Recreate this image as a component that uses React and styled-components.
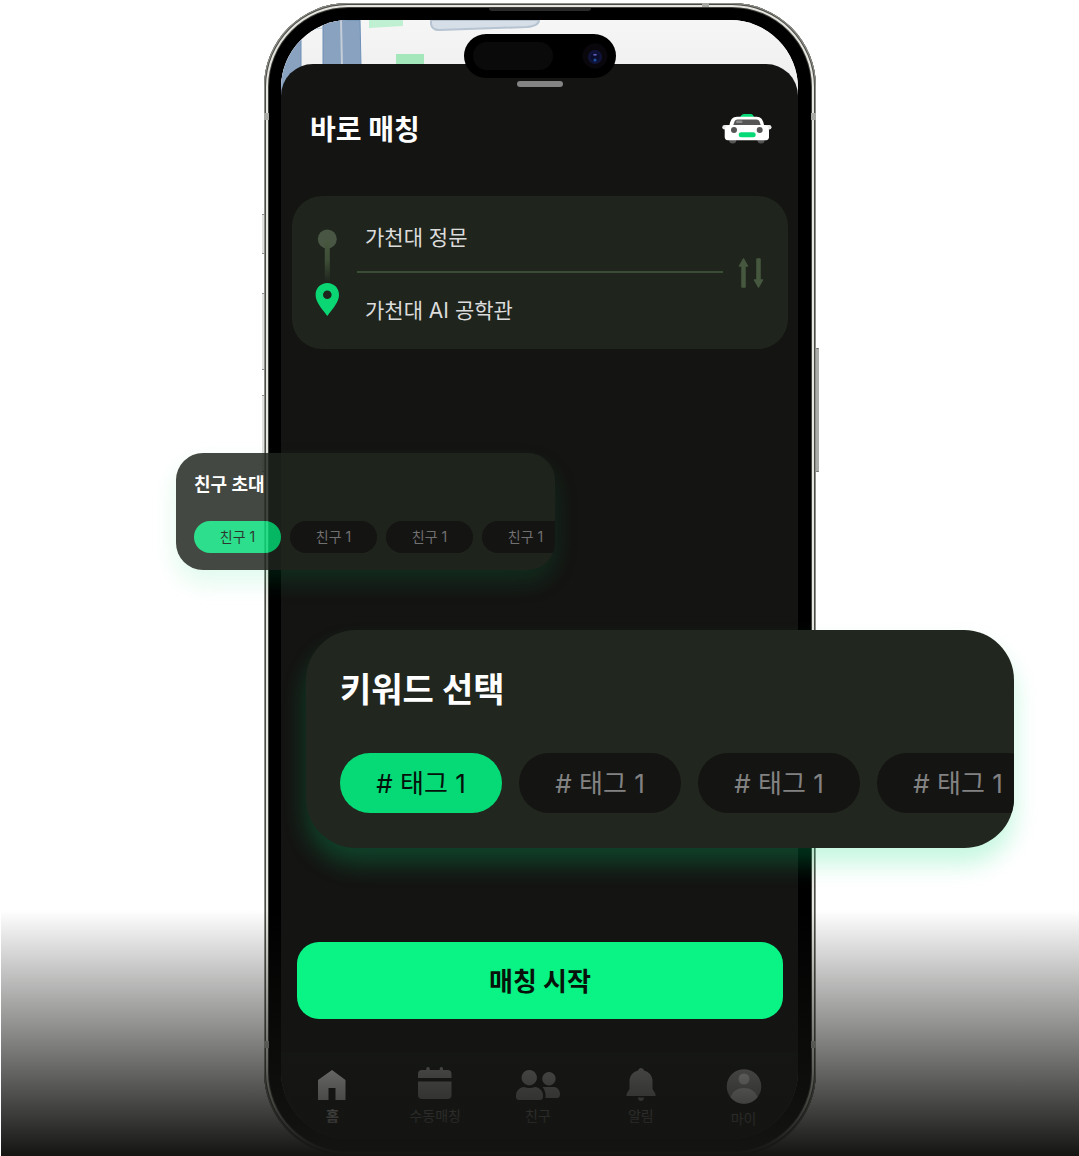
import React, { useState } from "react";
import styled, { createGlobalStyle } from "styled-components";

const GlobalStyle = createGlobalStyle`
  *, *::before, *::after { box-sizing: border-box; }
  body {
    margin: 0;
    background: #fff;
    font-family: Inter, "Noto Sans CJK KR", sans-serif;
    overflow-x: hidden;
  }
  button { font-family: inherit; border: 0; padding: 0; background: none; cursor: pointer; }
  h1, h2 { margin: 0; }
  svg { display: block; }
`;

const Stage = styled.main`
  position: relative;
  display: flex;
  justify-content: center;
  min-height: 100vh;
  padding: 3px 0 0 1px;
  overflow: hidden;
`;

const Fade = styled.div`
  position: absolute;
  inset: auto 0 0 1px;
  height: 246px;
  z-index: 1;
  pointer-events: none;
  background: linear-gradient(to bottom, rgba(20, 20, 18, 0), #141412);
`;

const Phone = styled.div`
  position: relative;
  display: flex;
  flex-direction: column;
  flex: 0 0 auto;
  width: 552px;
  padding: 17px 18px 17px 17px;
  border-radius: 84px;
  background: #000;
  box-shadow:
    inset 0 0 0 1px #8f8f89,
    inset 0 0 0 2px #4a4a46,
    inset 0 0 0 4px #e6e5df,
    inset 0 0 0 5px #3f3f3b;
`;

const SideKey = styled.span`
  position: absolute;
  top: ${(p) => p.$top}px;
  ${(p) => (p.$right ? "right: -3px;" : "left: -2px;")}
  width: ${(p) => (p.$right ? 3 : 2)}px;
  height: ${(p) => p.$height}px;
  border: solid #6b6b67;
  border-width: 1px 0;
  border-radius: 1px;
  background: ${(p) => (p.$right ? "#a9aba8" : "#e2e2e0")};
`;

const Antenna = styled.span`
  position: absolute;
  top: ${(p) => p.$top}px;
  ${(p) => (p.$right ? "right: 0;" : "left: 0;")}
  width: 5px;
  height: 7px;
  background: #a8a8a4;
`;

const TopAntenna = styled.span`
  position: absolute;
  top: 0;
  right: 107px;
  width: 7px;
  height: 4px;
  background: #a8a8a4;
`;

const Speaker = styled.span`
  position: absolute;
  top: 5px;
  left: 50%;
  width: 102px;
  height: 3px;
  transform: translateX(-50%);
  border-radius: 0 0 3px 3px;
  background: #2b2b2b;
`;

const Screen = styled.div`
  position: relative;
  display: flex;
  flex: 1;
  flex-direction: column;
  padding-top: 44px;
  overflow: hidden;
  border-radius: 68px;
  background: #f4f4f4;
`;

const MapLayer = styled.svg`
  position: absolute;
  top: 0;
  left: 0;
`;

const Island = styled.div`
  position: absolute;
  top: 31px;
  left: 50%;
  display: flex;
  align-items: center;
  justify-content: space-between;
  width: 152px;
  height: 44px;
  padding: 0 8px 0 9px;
  transform: translateX(-50%);
  border-radius: 22px;
  background: #000;
`;

const Sensor = styled.span`
  width: 80px;
  height: 28px;
  border-radius: 14px;
  background: #0a0a0a;
`;

const Sheet = styled.section`
  position: relative;
  display: flex;
  flex: 1;
  flex-direction: column;
  border-radius: 32px 32px 0 0;
  background: #141412;
`;

const Handle = styled.div`
  align-self: center;
  width: 46px;
  height: 6px;
  margin-top: 17px;
  border-radius: 3px;
  background: #838383;
`;

const Header = styled.header`
  display: flex;
  align-items: center;
  justify-content: space-between;
  height: 40px;
  margin: 23px 26px 46px 29px;
`;

const Title = styled.h1`
  color: #fff;
  font-size: 28px;
  line-height: 40px;
  font-weight: 700;
`;

const RouteCard = styled.div`
  display: flex;
  align-items: center;
  height: 153px;
  margin: 0 10px 0 11px;
  padding: 0 23px 0 22px;
  border-radius: 30px;
  background: #1f241d;
`;

const Stops = styled.div`
  flex: 1;
  margin: 0 14px 0 17px;
  padding-top: 3px;
`;

const Stop = styled.button`
  display: block;
  width: 100%;
  height: 36px;
  padding-left: 8px;
  color: #dcdcdc;
  font-size: 21px;
  line-height: 36px;
  font-weight: 400;
  text-align: left;
`;

const Divider = styled.hr`
  height: 2px;
  margin: 15px 0 20px;
  border: 0;
  background: #3a4c35;
`;

const StartButton = styled.button`
  position: relative;
  z-index: 2;
  height: 77px;
  margin: auto 15px 33px 16px;
  padding-top: 2px;
  border-radius: 22px;
  background: #0af385;
  color: #07120b;
  font-size: 26px;
  line-height: 36px;
  font-weight: 700;
`;

const Nav = styled.nav`
  display: grid;
  grid-template-columns: repeat(5, 1fr);
  height: 87px;
  padding: 15px 3px 0 0;
  background: #161a16;
`;

const NavItem = styled.a`
  display: flex;
  flex-direction: column;
  align-items: center;
  gap: 5px;
  color: ${(p) => (p.$active ? "#fff" : "#9a9a9a")};
  font-size: 14px;
  line-height: 20px;
  font-weight: ${(p) => (p.$active ? 700 : 400)};
  text-decoration: none;
`;

const Panel = styled.section`
  position: absolute;
  z-index: 3;
  overflow: hidden;
  background: #20261f;
`;

const FriendPanel = styled(Panel)`
  top: 450px;
  left: -88px;
  width: 379px;
  height: 117px;
  padding: 19px 0 0 18px;
  border-radius: 27px;
  opacity: 0.84;
  box-shadow: 0 12px 24px rgba(4, 222, 120, 0.15);
`;

const KeywordPanel = styled(Panel)`
  top: 627px;
  left: 42px;
  width: 708px;
  height: 218px;
  padding: 35px 0 0 34px;
  border-radius: 50px;
  background: #21271f;
  box-shadow: 0 16px 24px rgba(4, 222, 120, 0.23);
`;

const PanelTitle = styled.h2`
  color: #fff;
  font-size: ${(p) => (p.$large ? 34 : 18)}px;
  line-height: ${(p) => (p.$large ? 50 : 26)}px;
  font-weight: 700;
`;

const Chips = styled.div`
  display: flex;
  gap: ${(p) => (p.$large ? 17 : 9)}px;
  margin-top: ${(p) => (p.$large ? 38 : 23)}px;
`;

const Chip = styled.button`
  flex: none;
  width: ${(p) => (p.$large ? 162 : 87)}px;
  height: ${(p) => (p.$large ? 60 : 32)}px;
  padding-top: ${(p) => (p.$large ? 2 : 0)}px;
  border-radius: 30px;
  background: ${(p) => (p.$on ? "#06da77" : "#141412")};
  color: ${(p) => (p.$on ? "#04100a" : "#828282")};
  font-size: ${(p) => (p.$large ? 26 : 14)}px;
  line-height: ${(p) => (p.$large ? 36 : 20)}px;
  font-weight: 400;
`;

function MapArt() {
  return (
    <MapLayer width="517" height="90" viewBox="0 0 517 90" aria-hidden="true">
      <defs>
        <linearGradient id="mapShade" x1="0" y1="0" x2="0" y2="1">
          <stop offset="0" stopColor="#f6f6f6" />
          <stop offset="1" stopColor="#ebebed" />
        </linearGradient>
      </defs>
      <rect width="517" height="90" fill="url(#mapShade)" />
      <path d="M0 0H20V90H0Z" fill="#88a2c0" />
      <path d="M20 0V90" stroke="#6f90b8" />
      <path d="M22 10L42 8" stroke="#b9cad9" />
      <path d="M42 0H79L80 46H42Z" fill="#88a2c0" stroke="#6f90b8" />
      <path d="M60 0L61 46" stroke="#c4cdd8" strokeWidth="2" />
      <path d="M88 0H122V6L88 8Z" fill="#bff0d2" />
      <rect x="115" y="34" width="28" height="12" fill="#a3e7bb" />
      <path d="M150 0V4Q151 10 158 10L246 7Q258 6 258 0Z" fill="#d6dee7" stroke="#b6c3d1" strokeWidth="2" />
    </MapLayer>
  );
}

function Camera() {
  return (
    <svg width="26" height="26" viewBox="0 0 26 26" aria-hidden="true">
      <circle cx="13" cy="13" r="12.5" fill="#09070c" />
      <circle cx="13" cy="14" r="7" fill="#10143a" />
      <circle cx="13" cy="14" r="4.500" fill="#0a0d2c" />
      <ellipse cx="13" cy="11.700" rx="2" ry="1" fill="#5a58b0" />
      <circle cx="13" cy="17" r="1.600" fill="#1f509c" />
    </svg>
  );
}

function Taxi() {
  return (
    <svg width="50" height="33" viewBox="0 0 50 33" aria-hidden="true">
      <path d="M18 5C18 1.500 20 0 23 0H28C31 0 32 1.500 32 5Z" fill="#06da77" />
      <circle cx="10.700" cy="26" r="3.600" fill="#555" />
      <circle cx="39" cy="26" r="3.600" fill="#555" />
      <rect x="0.300" y="11" width="49.200" height="4.500" rx="2.200" fill="#e8e8e8" />
      <path d="M7.500 11C8.500 5.500 10.500 2.700 15 2.700H34.500C39 2.700 41 5.500 42 11C45.500 11.500 47 13 47 17V23C47 25 46 26.200 44 26.200H5.700C3.700 26.200 2.700 25 2.700 23V17C2.700 13 4 11.500 7.500 11Z" fill="#fff" />
      <path d="M11.300 11L12.500 7.500Q13.300 5.500 15.500 5.500H34.500Q36.700 5.500 37.500 7.500L38.700 11Z" fill="#555" />
      <rect x="14" y="6.500" width="6.500" height="2.500" rx="1.200" fill="#8a8a8a" />
      <circle cx="12" cy="16" r="3" fill="#555" />
      <circle cx="37.700" cy="16" r="3" fill="#555" />
      <rect x="16.700" y="18.300" width="17" height="5" rx="2.500" fill="#06da77" />
    </svg>
  );
}

function RouteMarks() {
  return (
    <svg width="26" height="90" viewBox="0 0 26 90" aria-hidden="true">
      <defs>
        <linearGradient id="trail" x1="0" y1="0" x2="0" y2="1">
          <stop offset="0" stopColor="#48593f" />
          <stop offset="0.500" stopColor="#3d4d36" />
          <stop offset="1" stopColor="#1f241d" />
        </linearGradient>
      </defs>
      <circle cx="13.300" cy="11" r="9.500" fill="#485643" />
      <rect x="10.800" y="11" width="5" height="43" rx="2" fill="url(#trail)" />
      <path fillRule="evenodd" d="M13.300 55C6.800 55 1.600 60 1.600 66.800C1.600 74 7.300 80 13.300 88C19.300 80 25 74 25 66.800C25 60 19.800 55 13.300 55ZM13.300 71A4.300 4.300 0 1 0 13.300 62.400A4.300 4.300 0 0 0 13.300 71Z" fill="#0bd674" />
    </svg>
  );
}

function SwapIcon() {
  return (
    <svg width="28" height="32" viewBox="0 0 28 32" fill="#46583f" stroke="#46583f" strokeLinejoin="round" aria-hidden="true">
      <path d="M6.500 2L10.500 9H8V30H5V9H2.500Z" strokeWidth="1.500" />
      <path d="M21.500 30L25.500 23H23V2H20V23H17.500Z" strokeWidth="1.500" />
    </svg>
  );
}

const icons = {
  home: (
    <path d="M18 3L31.500 13V33H21.500V21H14.500V33H4V13Z" />
  ),
  calendar: (
    <path d="M1 11V7Q1 3 5 3H9.300V1.500Q9.300 0 11 0Q12.700 0 12.700 1.500V3H22.700V1.500Q22.700 0 24.400 0Q26 0 26 1.500V3H30.500Q34.500 3 34.500 7V11ZM1 14.500H34.500V28Q34.500 32 30.500 32H5Q1 32 1 28Z" />
  ),
  friends: (
    <path d="M13.300 3A7.700 7.700 0 1 1 13.200 3ZM33 5A6.700 6.700 0 1 1 32.900 5ZM0 28C0 23 5 20 8 20Q13.500 22 19 20C22 20 27 23 27 28V30Q27 33 24 33H3Q0 33 0 30ZM26.500 20H38C41 20 44 23 44 27Q44 31 41 31H29.500Q30 24 26.500 20Z" />
  ),
  bell: (
    <path d="M18 1Q20.500 1 21 3.500C26.500 5 29.500 9 29.500 14V22L32.500 27V29H3.500V27L6.500 22V14C6.500 9 9.500 5 15 3.500Q15.500 1 18 1ZM14.800 30.500H21.200Q20.500 34 18 34Q15.500 34 14.800 30.500Z" />
  ),
  me: (
    <>
      <circle cx="18" cy="19.500" r="17.300" />
      <circle cx="18" cy="12" r="5.500" fill="#e6e6e6" />
      <path d="M4.300 30C7 24 12 21 18 21C24 21 29 24 31.700 30A17.300 17.300 0 0 1 4.300 30Z" fill="#e6e6e6" />
    </>
  ),
};

function NavIcon({ name, wide, tall }) {
  const w = wide ? 44 : 36;
  const h = tall ? 37 : 34;
  return (
    <svg width={w} height={h} viewBox={`0 0 ${w} ${h}`} fill="currentColor" aria-hidden="true">
      {icons[name]}
    </svg>
  );
}

const tabs = [
  { id: "home", label: "홈", active: true },
  { id: "calendar", label: "수동매칭" },
  { id: "friends", label: "친구", wide: true },
  { id: "bell", label: "알림" },
  { id: "me", label: "마이", tall: true },
];

function ChipRow({ label, large }) {
  const [selected, setSelected] = useState(0);
  return (
    <Chips $large={large}>
      {[0, 1, 2, 3].map((i) => (
        <Chip
          key={i}
          type="button"
          $large={large}
          $on={selected === i}
          aria-pressed={selected === i}
          onClick={() => setSelected(i)}
        >
          {label}
        </Chip>
      ))}
    </Chips>
  );
}

export default function App() {
  const [stops, setStops] = useState(["가천대 정문", "가천대 AI 공학관"]);
  return (
    <Stage>
      <GlobalStyle />
      <Phone>
        <SideKey $top={211} $height={40} />
        <SideKey $top={290} $height={77} />
        <SideKey $top={392} $height={77} />
        <SideKey $right $top={345} $height={124} />
        <Antenna $top={110} />
        <Antenna $right $top={110} />
        <Antenna $top={1038} />
        <Antenna $right $top={1038} />
        <TopAntenna />
        <Speaker />
        <Screen>
          <MapArt />
          <Sheet>
            <Handle />
            <Header>
              <Title>바로 매칭</Title>
              <Taxi />
            </Header>
            <RouteCard>
              <RouteMarks />
              <Stops>
                <Stop type="button">{stops[0]}</Stop>
                <Divider />
                <Stop type="button">{stops[1]}</Stop>
              </Stops>
              <button type="button" aria-label="출발지와 도착지 바꾸기" onClick={() => setStops([stops[1], stops[0]])}>
                <SwapIcon />
              </button>
            </RouteCard>
            <StartButton type="button">매칭 시작</StartButton>
            <Nav>
              {tabs.map((t) => (
                <NavItem key={t.id} href={`#${t.id}`} $active={t.active}>
                  <NavIcon name={t.id} wide={t.wide} tall={t.tall} />
                  {t.label}
                </NavItem>
              ))}
            </Nav>
          </Sheet>
        </Screen>
        <Island>
          <Sensor />
          <Camera />
        </Island>
        <FriendPanel>
          <PanelTitle>친구 초대</PanelTitle>
          <ChipRow label="친구 1" />
        </FriendPanel>
        <KeywordPanel>
          <PanelTitle $large>키워드 선택</PanelTitle>
          <ChipRow label="# 태그 1" large />
        </KeywordPanel>
      </Phone>
      <Fade />
    </Stage>
  );
}
